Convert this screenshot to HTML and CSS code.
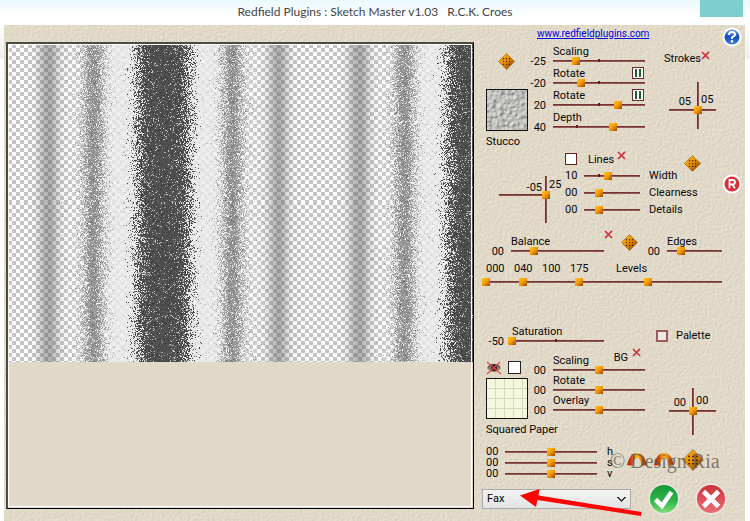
FILE: index.html
```html
<!DOCTYPE html>
<html lang="en">
<head>
<meta charset="utf-8">
<title>Sketch Master</title>
<link rel="stylesheet" href="styles.css">
</head>
<body>
<svg class="defs" aria-hidden="true">
  <defs>
    <linearGradient id="gold" x1="0" y1="0" x2="1" y2="1"><stop offset="0" stop-color="#ffc21c"/><stop offset=".5" stop-color="#e48c00"/><stop offset="1" stop-color="#713100"/></linearGradient>
    <linearGradient id="flame" x1="0" y1="0" x2="1" y2="0"><stop offset="0" stop-color="#a31a00"/><stop offset=".3" stop-color="#e05808"/><stop offset=".5" stop-color="#ffc21c"/><stop offset=".75" stop-color="#e06a08"/><stop offset="1" stop-color="#7e1a00"/></linearGradient>
    <linearGradient id="blue" x1="0" y1="0" x2="0" y2="1"><stop offset="0" stop-color="#6c9cf0"/><stop offset=".5" stop-color="#164cb8"/><stop offset="1" stop-color="#3e7ee4"/></linearGradient>
    <linearGradient id="green" x1="0" y1="0" x2="0" y2="1"><stop offset="0" stop-color="#159638"/><stop offset=".6" stop-color="#30b94c"/><stop offset="1" stop-color="#80df76"/></linearGradient>
    <linearGradient id="red" x1="0" y1="0" x2="0" y2="1"><stop offset="0" stop-color="#cc303c"/><stop offset="1" stop-color="#ef6f75"/></linearGradient>
    <filter id="sand" x="0" y="0" width="100%" height="100%" color-interpolation-filters="sRGB">
      <feTurbulence type="fractalNoise" baseFrequency=".4" numOctaves="2" seed="4"/>
      <feDiffuseLighting surfaceScale=".22" diffuseConstant="1.06" lighting-color="#f1e8d6"><feDistantLight azimuth="225" elevation="62"/></feDiffuseLighting>
    </filter>
    <filter id="plaster" x="0" y="0" width="100%" height="100%" color-interpolation-filters="sRGB">
      <feTurbulence type="fractalNoise" baseFrequency=".25" numOctaves="3" seed="9"/>
      <feDiffuseLighting surfaceScale="1.3" diffuseConstant="1.02" lighting-color="#dededa"><feDistantLight azimuth="225" elevation="58"/></feDiffuseLighting>
    </filter>
    <symbol id="dice" viewBox="0 0 17 17">
      <path d="M8.5 .5 16.5 8.5 8.5 16.5 .5 8.5z" fill="url(#gold)" stroke="#9c5a10" stroke-width=".6"/>
      <g fill="#3c1c00"><circle cx="5.500" cy="5.800" r=".7"/><circle cx="8.500" cy="5.800" r=".7"/><circle cx="11.500" cy="5.800" r=".7"/><circle cx="5.500" cy="8.600" r=".7"/><circle cx="8.500" cy="8.600" r=".7"/><circle cx="11.500" cy="8.600" r=".7"/><circle cx="5.500" cy="11.400" r=".7"/><circle cx="8.500" cy="11.400" r=".7"/><circle cx="11.500" cy="11.400" r=".7"/></g>
    </symbol>
    <symbol id="cross" viewBox="0 0 9 9"><path d="M1 1 8 8M8 .8 1 8" stroke="#cf3340" stroke-width="1.7" fill="none"/></symbol>
    <symbol id="arch" viewBox="0 0 20 14"><path d="M0 12C2 5 4 0 10 0s8 5 10 12l-6 1C14 8 13 5 10 5S7 9 6 13z" fill="url(#flame)"/></symbol>
  </defs>
</svg>

<header class="titlebar">
  <h1>Redfield Plugins : Sketch Master v1.03 &nbsp; R.C.K. Croes</h1>
  <button class="close" aria-label="Close"></button>
</header>

<main class="dialog">
  <svg class="sand" aria-hidden="true"><rect width="100%" height="100%" filter="url(#sand)"/></svg>
  <section class="preview" aria-label="Preview"><canvas id="preview" width="463" height="317"></canvas></section>

  <div class="panel">
    <div class="controls">
      <p class="site"><a href="#">www.redfieldplugins.com</a></p>

      <section class="strokes">
        <div class="side">
          <button class="icon die" aria-label="Random texture"><svg><use href="#dice"/></svg></button>
          <button class="swatch" aria-label="Choose texture"><svg><rect width="100%" height="100%" filter="url(#plaster)"/></svg></button>
          <span>Stucco</span>
        </div>
        <div class="sliders">
          <div class="slider"><label for="s1">Scaling</label><output>-25</output><input class="tick" id="s1" type="range" value="23"></div>
          <div class="slider"><label for="s2">Rotate</label><button class="pause" aria-label="Link rotation"></button><output>-20</output><input class="tick" id="s2" type="range" value="28"></div>
          <div class="slider"><label for="s3">Rotate</label><button class="pause" aria-label="Link rotation"></button><output>20</output><input class="tick" id="s3" type="range" value="73"></div>
          <div class="slider"><label for="s4">Depth</label><output>40</output><input class="tick early" id="s4" type="range" value="67"></div>
        </div>
        <div class="aside">
          <div class="heading"><span>Strokes</span><button class="icon reset" aria-label="Reset strokes"><svg><use href="#cross"/></svg></button></div>
          <div class="pad low"><output>05</output><output>05</output><button class="knob" aria-label="Stroke offset"></button></div>
        </div>
      </section>

      <section class="lines">
        <div class="pad end"><output>-05</output><output>25</output><button class="knob" aria-label="Line offset"></button></div>
        <div>
          <div class="lines-head"><input type="checkbox" id="lines"><label for="lines">Lines</label><button class="icon reset" aria-label="Reset lines"><svg><use href="#cross"/></svg></button><button class="icon die" aria-label="Random lines"><svg><use href="#dice"/></svg></button></div>
          <div class="line-row"><output>10</output><input class="tick early" id="l1" type="range" value="41"><label for="l1">Width</label></div>
          <div class="line-row"><output>00</output><input id="l2" type="range" value="22"><label for="l2">Clearness</label></div>
          <div class="line-row"><output>00</output><input id="l3" type="range" value="22"><label for="l3">Details</label></div>
        </div>
      </section>

      <section class="balance">
        <div class="slider"><label for="b1">Balance</label><output>00</output><input id="b1" type="range" value="22"></div>
        <button class="icon reset" aria-label="Reset balance"><svg><use href="#cross"/></svg></button>
        <button class="icon die" aria-label="Random balance"><svg><use href="#dice"/></svg></button>
        <div class="slider"><label for="b2">Edges</label><output>00</output><input id="b2" type="range" value="21"></div>
      </section>

      <section class="levels">
        <div class="level-values"><output>000</output><output>040</output><output>100</output><output>175</output><span>Levels</span></div>
        <div class="level-track">
          <input type="range" aria-label="Level 1" max="255" value="0"><input type="range" aria-label="Level 2" max="255" value="41"><input type="range" aria-label="Level 3" max="255" value="102"><input type="range" aria-label="Level 4" max="255" value="178">
        </div>
      </section>

      <section class="saturation">
        <div class="slider"><label for="sat">Saturation</label><output>-50</output><input class="tick" id="sat" type="range" value="0"></div>
        <div class="palette"><input class="soft" type="checkbox" id="palette"><label for="palette">Palette</label></div>
      </section>

      <section class="background">
        <div class="side">
          <div class="eye-row">
            <button class="icon eye" aria-label="Hide background"><svg viewBox="0 0 16 14"><path d="M1 7Q4 2 9 3q4 0 6 4-3 4-7 4T1 7z" fill="#8b8370"/><path d="M2 6q5-5 12 0" stroke="#3d3027" fill="none"/><circle cx="8" cy="7" r="3" fill="#2b1714"/><path d="M6 7h4l-2 2z" fill="#cc1820"/><path d="M1 1 15 13M14 1 1 13" stroke="#e4414b" stroke-width="1.1"/></svg></button>
            <input class="dark" type="checkbox" aria-label="Background color">
          </div>
          <button class="swatch squared" aria-label="Choose background"></button>
          <span>Squared Paper</span>
        </div>
        <div class="sliders">
          <div class="slider"><label for="g1">Scaling</label><span class="bg-head">BG<button class="icon reset" aria-label="Reset background"><svg><use href="#cross"/></svg></button></span><output>00</output><input id="g1" type="range" value="50"></div>
          <div class="slider"><label for="g2">Rotate</label><output>00</output><input id="g2" type="range" value="50"></div>
          <div class="slider"><label for="g3">Overlay</label><output>00</output><input id="g3" type="range" value="50"></div>
        </div>
        <div class="aside"><div class="pad center"><output>00</output><output>00</output><button class="knob" aria-label="Background offset"></button></div></div>
      </section>

      <section class="hsv">
        <div class="hsv-rows">
          <div class="hsv-row"><output>00</output><input id="h" type="range" value="50"><label for="h">h</label></div>
          <div class="hsv-row"><output>00</output><input id="s" type="range" value="50"><label for="s">s</label></div>
          <div class="hsv-row"><output>00</output><input id="v" type="range" value="50"><label for="v">v</label></div>
        </div>
        <button class="icon arch" aria-label="Undo"><svg><use href="#arch"/></svg></button>
        <button class="icon arch" aria-label="Redo"><svg><use href="#arch"/></svg></button>
        <button class="icon die large" aria-label="Random all"><svg><use href="#dice"/></svg></button>
        <span class="watermark">© Design Ria</span>
      </section>
    </div>

    <nav class="rail">
      <button class="icon round" aria-label="Help"><svg viewBox="0 0 20 20"><circle cx="10" cy="10" r="9.5" fill="#fff"/><circle cx="10" cy="10" r="7.5" fill="url(#blue)"/><path d="M7 8Q7 5 10 5t3 2.600Q13 9 10 10.400V12" stroke="#fff" stroke-width="2" fill="none"/><circle cx="10" cy="14.400" r="1.300" fill="#fff"/></svg></button>
      <button class="icon round" aria-label="Register"><svg viewBox="0 0 20 20"><circle cx="10" cy="10" r="9.5" fill="#fff"/><circle cx="10" cy="10" r="7.5" fill="#d9303c"/><path d="M7.500 14.200V6h3q2.500 0 2.500 2.200t-2.500 2.200h-3M10.300 10.400l2.700 3.800" stroke="#fff" stroke-width="1.800" fill="none"/></svg></button>
    </nav>

    <footer class="actions">
      <select aria-label="Preset"><option>Fax</option></select>
      <button class="icon action" aria-label="OK"><svg viewBox="0 0 32 32"><circle cx="16" cy="16" r="15.5" fill="#ece6e0"/><circle cx="16" cy="16" r="14" fill="url(#green)"/><path d="M7.500 16.500 14 23 23.500 9" stroke="#fff" stroke-width="4.600" fill="none"/></svg></button>
      <button class="icon action" aria-label="Cancel"><svg viewBox="0 0 32 32"><circle cx="16" cy="16" r="15.5" fill="#ece6e0"/><circle cx="16" cy="16" r="14" fill="url(#red)"/><path d="M8.500 8.500 23.500 23.500M23.500 8.500 8.500 23.500" stroke="#fff" stroke-width="4.800" fill="none"/></svg></button>
      <svg class="arrow" viewBox="0 0 122 30" aria-hidden="true"><path d="M0 8.500 19.500 2 18.500 8.500 121.500 25 121 29 17.500 13 16 20z" fill="#fb0505"/></svg>
    </footer>
  </div>
</main>
<script src="preview.js"></script>
</body>
</html>
```
FILE: styles.css
```css
* { box-sizing: border-box; }

body {
  margin: 0;
  min-height: 100vh;
  display: flex;
  flex-direction: column;
  font: 11px/12px Roboto, "Liberation Sans", sans-serif;
  color: #080808;
  background: linear-gradient(#fff0 25px, #eee 58px, #fff 60px), #fff;
}

button, input, select { font: inherit; margin: 0; padding: 0; }
button { border: 0; background: none; }
p, h1 { margin: 0; }
.defs { position: absolute; width: 0; height: 0; }

.titlebar {
  height: 25px;
  display: grid;
  grid-template-columns: 1fr auto 1fr;
  background: linear-gradient(#eaf9fb, #fff 16px);
}
.titlebar h1 {
  grid-column: 2;
  font: 12px/24px Lato, "Open Sans", sans-serif;
  color: #444;
}
.close {
  justify-self: end;
  width: 43px;
  height: 17px;
  margin-right: 7px;
  background: #7ccfce;
}

.dialog {
  flex: 1;
  position: relative;
  display: grid;
  grid-template-columns: minmax(0, 1fr) 263px;
  column-gap: 8px;
  margin: 0 5px 0 4px;
  padding-left: 2px;
  background: #e1d8c8;
}
.sand { position: absolute; inset: 0; width: 100%; height: 100%; }

.preview {
  position: relative;
  margin: 17px 0 12px;
  border: solid #000;
  border-width: 2px 1px 1px 2px;
  border-top-color: #51483f;
  border-left-color: #51483f;
  outline: 1px solid #fff;
  outline-offset: -3px;
  background: #e1d8ca;
}
.preview canvas { display: block; width: 100%; image-rendering: pixelated; }

.panel {
  position: relative;
  display: grid;
  grid-template-columns: 240px 20px;
  align-content: start;
}
.site { height: 20px; padding: 3px 0 0 55px; font-size: 10px; }
.site a { color: #0000e8; }

.icon { display: block; line-height: 0; }
.icon svg { display: block; width: 100%; height: 100%; overflow: visible; }
.die { width: 17px; height: 17px; }
.die.large { width: 22px; height: 22px; }
.reset { width: 9px; height: 9px; }

input[type="range"] {
  appearance: none;
  width: 100%;
  height: 8px;
  background: linear-gradient(#681d1d, #a0706a) center / 100% 2px no-repeat;
}
input[type="range"].tick {
  background:
    linear-gradient(#681d1d, #681d1d) 50% 2px / 2px 3px no-repeat,
    linear-gradient(#681d1d, #a0706a) center / 100% 2px no-repeat;
}
input[type="range"].early { background-position: 25% 2px, center; }
input[type="range"]::-webkit-slider-thumb {
  appearance: none;
  width: 8px;
  height: 8px;
  border: 0;
  background: linear-gradient(135deg, #ffc226, #f29a00 50%, #914500);
}

input[type="checkbox"] {
  appearance: none;
  width: 12px;
  height: 12px;
  border: 1px solid #5c2424;
  background: #fff;
}
input[type="checkbox"].soft { border: 2px solid #9b5c5c; background: #eee9e7; }
input[type="checkbox"].dark { width: 13px; height: 13px; border-color: #222; }

.slider {
  display: grid;
  grid-template-columns: 18px minmax(0, 1fr) auto;
  grid-template-rows: 12px 8px;
  column-gap: 7px;
}
.slider label { grid-area: 1 / 2; padding-top: 1px; }
.slider output { grid-area: 2 / 1; margin-top: -1px; text-align: right; }
.slider input { grid-area: 2 / 2 / 3 / 4; }
.pause {
  grid-area: 1 / 3;
  width: 12px;
  height: 12px;
  margin-right: 1px;
  border: 1px solid #682c2c;
  background:
    linear-gradient(#225c30, #225c30) 2px 1px / 2px 8px no-repeat,
    linear-gradient(#225c30, #225c30) 6px 1px / 2px 8px no-repeat,
    #fff;
}

.strokes, .background {
  display: grid;
  grid-template-columns: 46px 117px 58px;
}
.strokes { height: 104px; }
.sliders { display: grid; align-content: start; }
.strokes .sliders { row-gap: 2px; }
.aside { margin-left: 19px; width: 58px; }
.side { display: grid; justify-items: start; align-content: start; padding-left: 4px; white-space: nowrap; }
.strokes .side { padding-top: 8px; }
.strokes .die { margin-left: 12px; }
.swatch { width: 42px; height: 42px; border: 1px solid #111; background: #ddd; }
.swatch svg { display: block; width: 40px; height: 40px; }
.strokes .swatch { margin: 19px 0 5px; }
.heading { display: flex; padding-top: 6px; }
.heading span { line-height: 16px; }

.pad {
  position: relative;
  display: grid;
  grid-template-columns: 1fr 1fr;
  column-gap: 10px;
  width: 47px;
  height: 47px;
  background:
    linear-gradient(90deg, #681d1d, #9a6660) 60% 0 / 2px 100% no-repeat,
    linear-gradient(#681d1d, #9a6660) 0 60% / 100% 2px no-repeat;
}
.pad output:first-of-type { text-align: right; }
.knob {
  position: absolute;
  width: 8px;
  height: 8px;
  background: linear-gradient(135deg, #ffc226, #f29a00 50%, #914500);
}
.pad.low {
  margin: 15px 0 0 5px;
  padding-top: 12px;
  grid-template-columns: 22px 1fr;
  background-position: 28px 0, 0 27px;
}
.low .knob { left: 25px; top: 24px; }
.pad.low output:first-child { padding-top: 2px; }
.pad.end {
  padding-top: 3px;
  width: 65px;
  margin: 27px 0 0 17px;
  grid-template-columns: 43px 1fr;
  column-gap: 7px;
  background-position: 46px 0, 0 18px;
  background-size: 2px 100%, 47px 2px;
}
.pad.end output:first-child { padding-top: 3px; }
.end .knob { left: 43px; top: 15px; }
.pad.center {
  margin: 34px 0 0 5px;
  padding-top: 7px;
  grid-template-columns: 17px 1fr;
  background-position: 23px 0, 0 22px;
}
.center .knob { left: 20px; top: 19px; }
.pad.center output:first-child { padding-top: 2px; }

.lines { display: grid; grid-template-columns: 83px 1fr; height: 86px; }
.lines-head { display: flex; height: 18px; padding-top: 4px; }
.lines-head label { margin: 1px 3px 0 11px; }
.lines-head .reset { margin-top: -2px; }
.lines-head .die { margin: 2px 21px 0 auto; }
.line-row { display: grid; grid-template-columns: 12px 56px 1fr; column-gap: 7px; height: 17px; align-items: center; }
.line-row label { padding-left: 2px; }

.balance { display: flex; align-items: start; height: 27px; }
.balance .slider:first-child { width: 122px; grid-template-columns: 22px 1fr; }
.balance .reset { margin: -5px 8px 0 0; }
.balance .die { margin-top: -1px; }
.balance .slider:last-child { flex: 1; grid-template-columns: 22px 1fr; }

.level-values { display: grid; grid-template-columns: 28px 28px 28px 46px 1fr; padding: 1px 0 0 4px; height: 16px; }
.level-track { display: grid; }
.level-track input { grid-area: 1 / 1; pointer-events: none; }
.level-track input + input { background: none; }
.level-track input::-webkit-slider-thumb { pointer-events: auto; }

.saturation { display: grid; grid-template-columns: 174px 1fr; margin-top: 39px; height: 29px; }
.saturation .slider { width: 122px; grid-template-columns: 22px 1fr; column-gap: 4px; }
.saturation label[for="sat"] { padding-left: 4px; }
.palette { display: flex; gap: 8px; padding-top: 5px; }

.background { height: 92px; }
.background .side { padding-top: 7px; }
.eye-row { display: flex; gap: 6px; height: 17px; }
.eye { width: 16px; height: 14px; }
.squared {
  height: 41px;
  margin-bottom: 5px;
  background:
    repeating-linear-gradient(90deg, #0000 0 8px, #d4d8c2 8px 9px),
    repeating-linear-gradient(#0000 0 9px, #d4d8c2 9px 10px),
    #f3f7dc;
}
.bg-head { grid-area: 1 / 3; display: flex; gap: 4px; margin: -2px 4px 0 0; }
.bg-head .reset { margin-top: -4px; }

.hsv { position: relative; display: flex; align-items: center; height: 33px; }
.hsv-row { display: grid; grid-template-columns: 12px 92px 11px; column-gap: 7px; height: 11px; padding-left: 4px; line-height: 11px; align-items: center; }
.hsv-row label { padding-left: 3px; }
.hsv-rows { width: 145px; }
.arch { width: 20px; height: 14px; margin: 0 7px 6px 0; }
.arch + .arch { margin-right: 8px; }
.large { margin-bottom: 6px; }
.watermark {
  position: absolute;
  left: 128px;
  top: 3px;
  font: 20px/24px "Liberation Serif", serif;
  color: #5f5b57c8;
  white-space: nowrap;
}

.rail { display: flex; flex-direction: column; gap: 127px; padding-top: 2px; }
.round { width: 20px; height: 20px; }

.actions { position: relative; grid-column: 1 / 3; display: flex; align-items: center; height: 36px; margin-top: 2px; }
.actions select {
  appearance: none;
  width: 149px;
  height: 20px;
  margin-right: 17px;
  padding-left: 4px;
  border: 1px solid #aaa;
  border-radius: 0;
  color: #000;
  background:
    linear-gradient(45deg, #0000 42%, #333 42% 62%, #0000 62%) 134px 7px / 5px 5px no-repeat,
    linear-gradient(-45deg, #0000 42%, #333 42% 62%, #0000 62%) 138px 7px / 5px 5px no-repeat,
    linear-gradient(#f3f3f3, #e3e3e3);
}
.action { width: 32px; height: 32px; margin-right: 15px; }
.arrow { position: absolute; left: 38px; top: 6px; width: 122px; height: 30px; pointer-events: none; }
```
FILE: preview.js
```js
// Draws the filtered picture: soft vertical bands with a grainy edge over a transparency checker.
const canvas = document.getElementById("preview");
const ctx = canvas.getContext("2d");
const image = ctx.createImageData(canvas.width, canvas.height);
const period = 309;

let seed = 12345;
function random() {
  seed = (Math.imul(seed, 1664525) + 1013904223) >>> 0;
  return seed / 4294967296;
}

function bell(x, centre, width) {
  const d = (x - centre) / width;
  return Math.exp(-d * d);
}

for (let y = 0; y < canvas.height; y++) {
  for (let x = 0; x < canvas.width; x++) {
    const checker = (Math.floor(x / 4) + Math.floor(y / 4)) % 2 ? 196 : 255;
    const spread = (random() + random() + random() - 1.5) * 11;
    const p = x % period;
    const q = (x + spread + period) % period;
    const veil = Math.min(1, Math.max(0, (p - 50) / 60), Math.max(0, (260 - p) / 60)) * 0.85;
    let value = checker * (1 - veil) + 235 * veil;
    const soft = 0.5 * (bell(p, 40, 10) + bell(p, 269, 10));
    value = value * (1 - soft) + 100 * soft;
    if ((q > 76 && q < 94) || (q > 214 && q < 232)) {
      const core = Math.max(bell(p, 85, 9), bell(p, 223, 9));
      value = value * 0.15 + 122 - 32 * core + random() * 45;
    }
    if (q > 128 && q < 180) {
      const edge = Math.abs(p - 154) / 25;
      value = random() < 0.05 + 0.12 * edge ? 140 + random() * 80 : 62 + random() * 32;
    } else if (p > 50 && p < 260 && random() < 0.07) value -= random() * 50;
    const i = (y * canvas.width + x) * 4;
    image.data[i] = image.data[i + 1] = image.data[i + 2] = value;
    image.data[i + 3] = 255;
  }
}
ctx.putImageData(image, 0, 0);
```
